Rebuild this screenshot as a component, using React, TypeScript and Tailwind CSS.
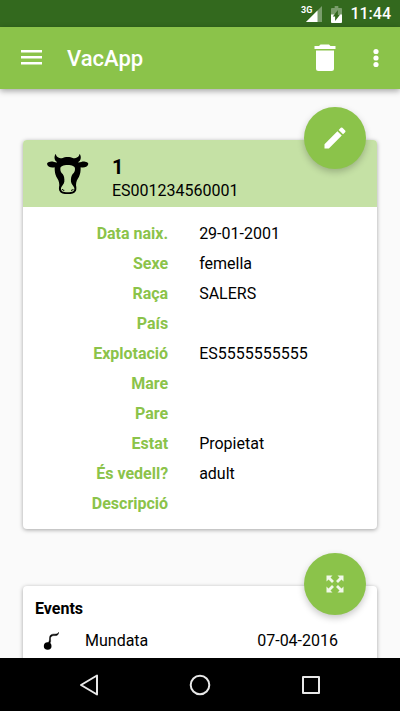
import React from "react";

type Field = { label: string; value: string };

const fields: Field[] = [
  { label: "Data naix.", value: "29-01-2001" },
  { label: "Sexe", value: "femella" },
  { label: "Raça", value: "SALERS" },
  { label: "País", value: "" },
  { label: "Explotació", value: "ES5555555555" },
  { label: "Mare", value: "" },
  { label: "Pare", value: "" },
  { label: "Estat", value: "Propietat" },
  { label: "És vedell?", value: "adult" },
  { label: "Descripció", value: "" },
];

function StatusBar() {
  return (
    <div className="flex h-[27px] shrink-0 items-center justify-end bg-[#33691e] pt-px pr-[9px] text-white">
      <span className="mb-2 text-[9px] leading-none font-bold">3G</span>
      <svg className="-ml-1.5 h-4 w-4" viewBox="0 0 16 16" aria-hidden="true">
        <path d="M16 0v16H0z" fill="#fff" fillOpacity="0.35" />
        <path d="M11.500 4.500V16H0z" fill="#fff" />
      </svg>
      <svg className="ml-[9px] h-[17px] w-[11px]" viewBox="0 0 12 17" preserveAspectRatio="none" aria-hidden="true">
        <path d="M4 0h4v2h3a1 1 0 0 1 1 1v6H0V3a1 1 0 0 1 1-1h3z" fill="#fff" fillOpacity="0.35" />
        <path d="M0 8.500h12v7.500a1 1 0 0 1-1 1H1a1 1 0 0 1-1-1z" fill="#fff" />
        <path d="M7.500 4v4.500h2.500L4.500 15v-4.500H2z" fill="#33691e" />
      </svg>
      <span className="ml-2 text-[16px] leading-none font-medium">11:44</span>
    </div>
  );
}

function AppBar() {
  return (
    <header className="relative z-10 flex h-[62px] shrink-0 items-center bg-[#8bc34a] pr-3 pl-5 text-white shadow-[0_2px_6px_rgba(0,0,0,0.35)]">
      <button type="button" aria-label="Menu" className="flex">
        <svg className="h-[22px] w-[22px]" viewBox="0 0 22 22" fill="currentColor">
          <path d="M1 3h21v2.500H1zM1 9h21v2.500H1zM1 15h21v2.500H1z" />
        </svg>
      </button>
      <h1 className="ml-[25px] flex-1 pt-px text-[22px] leading-7 font-medium">VacApp</h1>
      <button type="button" aria-label="Delete" className="flex">
        <svg className="h-7 w-[22px]" viewBox="0 0 22 28" fill="currentColor">
          <path d="M6.500 0.500h8.500l1.500 1.500H21.500v3H0.500v-3H5zM2 6.500h18V24.500a2.500 2.500 0 0 1-2.500 2.500h-13A2.500 2.500 0 0 1 2 24.500z" />
        </svg>
      </button>
      <button type="button" aria-label="More options" className="ml-7 flex w-6 justify-center">
        <svg className="h-5 w-1.5" viewBox="0 0 6 20" fill="currentColor">
          <circle cx="3" cy="3.500" r="2.600" />
          <circle cx="3" cy="10" r="2.600" />
          <circle cx="3" cy="16.500" r="2.600" />
        </svg>
      </button>
    </header>
  );
}

function Fab({ label, children }: { label: string; children: React.ReactNode }) {
  return (
    <button
      type="button"
      aria-label={label}
      className="absolute -top-[33px] right-[11px] flex h-[62px] w-[62px] items-center justify-center rounded-full bg-[#8bc34a] text-white shadow-[0_3px_7px_rgba(0,0,0,0.22)]"
    >
      {children}
    </button>
  );
}

function CowIcon() {
  return (
    <svg className="h-[41px] w-[42px]" viewBox="21 24 126 123" aria-hidden="true">
      <path d="M47 26C49 35 54 39 66 40C71 37 77 36 83 36C89 36 95 37 100 40C112 39 117 35 119 26C125 36 123 46 114 52C121 53 126 49 135 50C141 51 145 53 145 57C142 67 132 69 122 67C122 79 121 87 117 95C112 103 108 109 108 121C109 126 110 131 108 137C104 145 95 147 83 147C71 147 62 145 58 137C56 131 57 126 58 121C58 109 54 103 49 95C45 87 44 79 44 67C34 69 24 67 21 57C21 53 25 50 31 50C40 49 45 53 52 52C43 46 41 36 47 26Z" />
      <path d="M61 71C61 64 70 60 83 60C96 60 105 64 105 71C105 78 103 83 98 87C94 92 92 101 93 110C94 117 101 122 103 129C104 139 97 142 83 142C69 142 62 139 63 129C65 122 72 117 73 110C74 101 72 92 68 87C63 83 61 78 61 71Z" fill="#c5e1a5" />
      <path d="M66 132q2 5 7 4M100 132q-2 5-7 4" fill="none" stroke="#000" strokeWidth="3" />
    </svg>
  );
}

function AnimalCard() {
  return (
    <section className="relative rounded-sm bg-white shadow-[0_1px_4px_rgba(0,0,0,0.35)]">
      <div className="flex h-[67px] items-center rounded-t-sm bg-[#c5e1a5] pl-6">
        <CowIcon />
        <div className="ml-[23px] pt-2.5">
          <h2 className="text-[20px] leading-6 font-bold">1</h2>
          <p className="text-[16px] leading-6">ES001234560001</p>
        </div>
      </div>
      <Fab label="Edit">
        <svg className="h-7 w-7" viewBox="0 0 24 24" fill="currentColor">
          <path d="M3 17.250V21h3.750L17.810 9.940l-3.750-3.750L3 17.250zM20.710 7.040a1 1 0 0 0 0-1.410l-2.340-2.340a1 1 0 0 0-1.410 0l-1.830 1.830 3.750 3.750 1.830-1.830z" />
        </svg>
      </Fab>
      <dl className="pt-3 pb-2.5">
        {fields.map((f) => (
          <div key={f.label} className="flex h-[30px] items-center text-[16px] leading-6">
            <dt className="w-[41%] text-right font-bold text-[#8bc34a]">{f.label}</dt>
            <dd className="ml-[31px]">{f.value}</dd>
          </div>
        ))}
      </dl>
    </section>
  );
}

function EventsCard() {
  return (
    <section className="relative rounded-sm bg-white px-3 pt-[11px] pb-4 shadow-[0_1px_4px_rgba(0,0,0,0.35)]">
      <h2 className="text-[16px] leading-6 font-bold">Events</h2>
      <Fab label="Expand events">
        <svg className="h-[18px] w-[18px] text-[#f1f8e9]" viewBox="0 0 18 18" fill="currentColor" stroke="currentColor">
          <path d="M.5.500h6l-6 6zM17.500.500h-6l6 6zM.5 17.500h6l-6-6zM17.500 17.500h-6l6-6z" stroke="none" />
          <path d="M3 3l4 4M15 3l-4 4M3 15l4-4M15 15l-4-4" strokeWidth="2.800" />
        </svg>
      </Fab>
      <ul>
        <li className="mt-2 flex items-center text-[16px] leading-6">
          <svg className="ml-2 h-5 w-4" viewBox="84 180 48 60" aria-hidden="true">
            <circle cx="98" cy="225" r="11.500" />
            <path d="M103 218C112 211 101 200 111 195C119 191 129 199 131 184C127 193 119 187 109 191C100 195 107 206 100 215Z" stroke="#000" strokeWidth="1.500" />
          </svg>
          <span className="ml-[26px] flex-1">Mundata</span>
          <time className="mr-[27px]">07-04-2016</time>
        </li>
      </ul>
    </section>
  );
}

function NavBar() {
  return (
    <nav className="flex h-[53px] shrink-0 items-center justify-center gap-[87px] bg-black text-[#e8e8e8]">
      <button type="button" aria-label="Back" className="flex">
        <svg className="h-6 w-6" viewBox="0 0 24 24" fill="none" stroke="currentColor" strokeWidth="2" strokeLinejoin="round">
          <path d="M20 2.500v19L4 12z" />
        </svg>
      </button>
      <button type="button" aria-label="Home" className="flex">
        <svg className="h-6 w-6" viewBox="0 0 24 24" fill="none" stroke="currentColor" strokeWidth="2">
          <circle cx="12" cy="12" r="9.300" />
        </svg>
      </button>
      <button type="button" aria-label="Recent apps" className="flex">
        <svg className="h-6 w-6" viewBox="0 0 24 24" fill="none" stroke="currentColor" strokeWidth="2" strokeLinejoin="round">
          <path d="M4 4h16v16H4z" />
        </svg>
      </button>
    </nav>
  );
}

export default function App() {
  return (
    <div className="flex h-screen flex-col overflow-hidden bg-[#fafafa] font-[Roboto,sans-serif] text-black">
      <StatusBar />
      <AppBar />
      <main className="flex min-h-0 flex-1 flex-col gap-[57px] overflow-hidden px-[23px] pt-[51px]">
        <AnimalCard />
        <EventsCard />
      </main>
      <NavBar />
    </div>
  );
}
